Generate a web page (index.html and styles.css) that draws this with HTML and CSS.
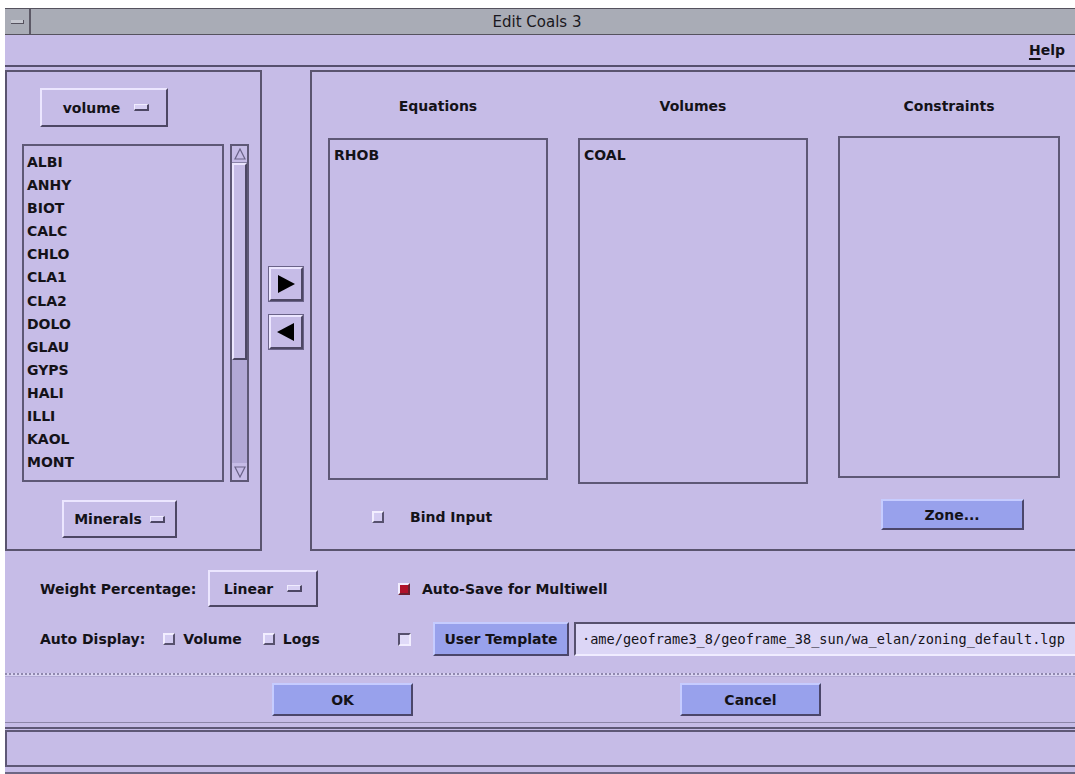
FILE: index.html
```html
<!DOCTYPE html>
<html>
<head>
<meta charset="utf-8">
<title>Edit Coals 3</title>
<link rel="stylesheet" href="styles.css">
</head>
<body>
<div class="window">
  <div class="titlebar">
    <div class="win-menu"><span class="win-menu-bar"></span></div>
    <div class="title">Edit Coals 3</div>
  </div>
  <div class="menubar">
    <span class="menu-item"><u>H</u>elp</span>
  </div>

  <div class="workspace">
    <div class="panel left-panel">
      <button class="option-btn volume-btn">volume <span class="indicator"></span></button>
      <div class="list-row">
        <ul class="list mineral-list">
          <li>ALBI</li><li>ANHY</li><li>BIOT</li><li>CALC</li><li>CHLO</li>
          <li>CLA1</li><li>CLA2</li><li>DOLO</li><li>GLAU</li><li>GYPS</li>
          <li>HALI</li><li>ILLI</li><li>KAOL</li><li>MONT</li>
        </ul>
        <div class="scrollbar">
          <div class="scroll-arrow up"><svg width="12" height="12" viewBox="0 0 12 12"><path d="M6 1 L11 11 L1 11 Z" fill="none" stroke="#6a6388" stroke-width="1.2"/></svg></div>
          <div class="thumb"></div>
          <div class="trough"></div>
          <div class="scroll-arrow down"><svg width="12" height="12" viewBox="0 0 12 12"><path d="M1 1 L11 1 L6 11 Z" fill="none" stroke="#6a6388" stroke-width="1.2"/></svg></div>
        </div>
      </div>
      <button class="option-btn minerals-btn">Minerals <span class="indicator"></span></button>
    </div>

    <div class="arrow-col">
      <button class="arrow-btn"><svg width="22" height="22" viewBox="0 0 22 22"><path d="M3 2 L20 11 L3 20 Z" fill="#000"/></svg></button>
      <button class="arrow-btn"><svg width="22" height="22" viewBox="0 0 22 22"><path d="M19 2 L2 11 L19 20 Z" fill="#000"/></svg></button>
    </div>

    <div class="panel right-panel">
      <div class="columns">
        <div class="col-head">Equations</div>
        <div class="col-head">Volumes</div>
        <div class="col-head">Constraints</div>
        <ul class="list col-list"><li>RHOB</li></ul>
        <ul class="list col-list tall"><li>COAL</li></ul>
        <ul class="list col-list short"></ul>
        <div class="bind">
          <span class="toggle"></span><span class="bind-label">Bind Input</span>
        </div>
        <div></div>
        <div class="zone-cell"><button class="push-btn zone-btn">Zone...</button></div>
      </div>
    </div>
  </div>

  <div class="options">
    <div class="opt-row row-one">
      <div class="opt-left">
        <span class="label weight-label">Weight Percentage:</span>
        <button class="option-btn linear-btn">Linear <span class="indicator"></span></button>
      </div>
      <div class="opt-right">
        <span class="toggle on"></span><span class="label autosave-label">Auto-Save for Multiwell</span>
      </div>
    </div>
    <div class="opt-row row-two">
      <div class="opt-left">
        <span class="label display-label">Auto Display:</span>
        <span class="toggle"></span><span class="label check-label">Volume</span>
        <span class="toggle logs-toggle"></span><span class="label check-label">Logs</span>
      </div>
      <div class="opt-right">
        <span class="toggle plain"></span>
        <button class="push-btn template-btn">User Template</button>
        <div class="text-field">·ame/geoframe3_8/geoframe_38_sun/wa_elan/zoning_default.lgp</div>
      </div>
    </div>
  </div>

  <div class="separator"></div>

  <div class="actions">
    <button class="push-btn ok-btn">OK</button>
    <button class="push-btn cancel-btn">Cancel</button>
  </div>

  <div class="double-line"></div>
  <div class="status"></div>
</div>
</body>
</html>
```

FILE: styles.css
```css
* {
  box-sizing: border-box;
}

html, body {
  margin: 0;
  padding: 0;
  background: #ffffff;
  width: 1075px;
  height: 774px;
  overflow: hidden;
}

body {
  font-family: "DejaVu Sans", "Liberation Sans", sans-serif;
  font-size: 14px;
  color: #141218;
}

button {
  font-family: inherit;
  font-size: 14px;
  font-weight: bold;
  color: #141218;
  padding: 0;
  margin: 0;
  cursor: default;
}

ul {
  list-style: none;
  margin: 0;
  padding: 0;
}

.window {
  margin: 8px 0 0 5px;
  width: 1070px;
  height: 766px;
  background: #c6bce7;
  display: flex;
  flex-direction: column;
  border-bottom: 2px solid #6d6784;
}

/* title bar */
.titlebar {
  height: 27px;
  background: #a9acb6;
  border-top: 1px solid #55525e;
  border-bottom: 1px solid #55525e;
  display: flex;
  align-items: center;
}

.win-menu {
  width: 26px;
  height: 100%;
  border-right: 2px solid #5c5966;
  display: flex;
  align-items: center;
  justify-content: center;
}

.win-menu-bar {
  width: 13px;
  height: 4px;
  background: #c6c8d0;
  border-bottom: 1px solid #55525e;
  border-right: 1px solid #55525e;
}

.title {
  flex: 1;
  text-align: center;
  font-size: 15px;
  color: #1a1820;
  padding-right: 32px;
}

/* menu bar */
.menubar {
  height: 32px;
  border-bottom: 2px solid #56506e;
  display: flex;
  justify-content: flex-end;
  align-items: center;
  padding-right: 10px;
}

.menu-item {
  font-weight: bold;
}

.menu-item u {
  text-decoration-thickness: 2px;
  text-underline-offset: 3px;
}

/* main work area */
.workspace {
  margin-top: 3px;
  height: 481px;
  display: flex;
}

.panel {
  border: 2px solid #5a546f;
}

.left-panel {
  width: 257px;
  display: flex;
  flex-direction: column;
  align-items: flex-start;
}

.option-btn {
  background: #c6bce7;
  border: 2px solid;
  border-color: #ece6ff #4d4764 #4d4764 #ece6ff;
  display: flex;
  align-items: center;
  justify-content: center;
  gap: 14px;
}

.indicator {
  display: inline-block;
  width: 15px;
  height: 7px;
  background: #d8d0f4;
  border: 1px solid;
  border-color: #f0ecff #4d4764 #4d4764 #f0ecff;
  border-bottom-width: 2px;
  border-right-width: 2px;
}

.volume-btn {
  margin: 16px 0 0 33px;
  width: 128px;
  height: 39px;
  padding-left: 4px;
}

.list-row {
  margin: 17px 0 0 15px;
  display: flex;
  gap: 6px;
  height: 338px;
}

.list {
  border: 2px solid #5e5876;
  background: #c6bce7;
  font-weight: bold;
  font-size: 14px;
}

.mineral-list {
  width: 202px;
  height: 338px;
  padding: 5px 0 0 3px;
}

.mineral-list li {
  height: 23.1px;
  line-height: 23px;
}

.scrollbar {
  width: 19px;
  height: 338px;
  border: 2px solid #5e5876;
  display: flex;
  flex-direction: column;
  background: #b2a8d6;
}

.scroll-arrow {
  height: 17px;
  display: flex;
  align-items: center;
  justify-content: center;
  background: #c6bce7;
}

.scroll-arrow.up {
  border-bottom: 1px solid #8a83a8;
}

.thumb {
  height: 197px;
  background: #c6bce7;
  border: 2px solid;
  border-color: #ece6ff #4d4764 #4d4764 #ece6ff;
}

.trough {
  flex: 1;
}

.minerals-btn {
  margin: 18px 0 0 55px;
  width: 115px;
  height: 38px;
  gap: 8px;
}

/* transfer arrows */
.arrow-col {
  width: 48px;
  display: flex;
  flex-direction: column;
  align-items: center;
  padding-top: 197px;
  gap: 14px;
}

.arrow-btn {
  width: 34px;
  height: 34px;
  background: #c6bce7;
  border: 2px solid;
  border-color: #ece6ff #4d4764 #4d4764 #ece6ff;
  outline: 1px solid #6a6388;
  display: flex;
  align-items: center;
  justify-content: center;
}

.right-panel {
  flex: 1;
  border-right: none;
}

.columns {
  display: grid;
  grid-template-columns: 220px 230px 222px;
  grid-template-rows: 20px 346px 1fr;
  column-gap: 30px;
  row-gap: 22px;
  padding: 24px 0 0 16px;
  height: 100%;
}

.col-head {
  text-align: center;
  font-weight: bold;
  line-height: 20px;
}

.col-list {
  height: 342px;
  padding: 5px 0 0 4px;
}

.col-list li {
  line-height: 20px;
}

.col-list.tall {
  height: 346px;
}

.col-list.short {
  height: 342px;
  margin-top: -2px;
}

.bind {
  display: flex;
  align-items: center;
  padding: 6px 0 0 44px;
  height: 36px;
  margin-top: -10px;
}

.bind-label {
  font-weight: bold;
  margin-left: 26px;
}

.zone-cell {
  display: flex;
  justify-content: center;
  padding-left: 6px;
  margin-top: -7px;
}

.toggle {
  display: inline-block;
  width: 12px;
  height: 12px;
  background: #d4ccf2;
  border: 2px solid;
  border-color: #f2eeff #57516e #57516e #f2eeff;
  flex: none;
}

.toggle.on {
  background: #b0122a;
  border-color: #f2eeff #6a2030 #6a2030 #f2eeff;
}

.toggle.plain {
  width: 13px;
  height: 13px;
  background: #e0daf8;
  border-color: #57516e #f2eeff #f2eeff #57516e;
}

.push-btn {
  background: #98a1ec;
  border: 2px solid;
  border-color: #c6ccff #4b466a #4b466a #c6ccff;
}

.zone-btn {
  width: 143px;
  height: 31px;
}

/* lower option area */
.options {
  height: 121px;
  padding: 19px 0 0 35px;
  display: flex;
  flex-direction: column;
  gap: 15px;
}

.opt-row {
  display: flex;
  align-items: center;
}

.row-one {
  height: 37px;
}

.row-two {
  height: 34px;
}

.opt-left {
  width: 358px;
  display: flex;
  align-items: center;
}

.opt-right {
  flex: 1;
  display: flex;
  align-items: center;
}

.label {
  font-weight: bold;
}

.weight-label {
  width: 168px;
}

.linear-btn {
  width: 110px;
  height: 37px;
  gap: 14px;
}

.autosave-label {
  margin-left: 12px;
}

.display-label {
  margin-right: 18px;
}

.check-label {
  margin-left: 8px;
}

.logs-toggle {
  margin-left: 21px;
}

.template-btn {
  margin-left: 22px;
  width: 136px;
  height: 34px;
}

.text-field {
  margin-left: 5px;
  flex: 1;
  height: 34px;
  background: #dcd6f6;
  border: 2px solid;
  border-color: #57516e #f0ecff #f0ecff #57516e;
  border-right: none;
  font-family: "DejaVu Sans Mono", "Liberation Mono", monospace;
  font-size: 13.6px;
  line-height: 30px;
  padding-left: 6px;
  white-space: nowrap;
  overflow: hidden;
  color: #141218;
}

.separator {
  height: 4px;
  margin-top: 1px;
  border-top: 2px dotted #8f88ae;
  border-bottom: 1px solid #b3aad6;
  background: #d8d2f2;
}

.actions {
  height: 45px;
  display: flex;
  align-items: center;
  padding-left: 267px;
}

.ok-btn, .cancel-btn {
  width: 141px;
  height: 33px;
}

.cancel-btn {
  margin-left: 267px;
}

.double-line {
  height: 7px;
  border-top: 1px solid #8c85a8;
  border-bottom: 2px solid #5e5876;
}

.status {
  margin-top: 1px;
  height: 37px;
  border: 2px solid #5e5876;
  border-right: none;
}
```
